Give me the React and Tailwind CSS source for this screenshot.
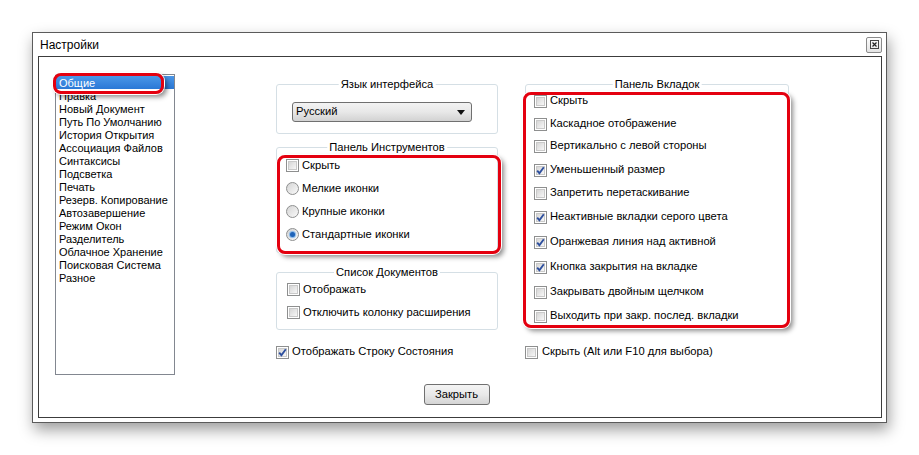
const font = { fontFamily: '"Liberation Sans", Arial, sans-serif' };

const pages = [
  'Общие', 'Правка', 'Новый Документ', 'Путь По Умолчанию', 'История Открытия',
  'Ассоциация Файлов', 'Синтаксисы', 'Подсветка', 'Печать', 'Резерв. Копирование',
  'Автозавершение', 'Режим Окон', 'Разделитель', 'Облачное Хранение',
  'Поисковая Система', 'Разное',
];

const tabOptions = [
  { label: 'Скрыть', on: false, cls: '' },
  { label: 'Каскадное отображение', on: false, cls: 'mt-[1px]' },
  { label: 'Вертикально с левой стороны', on: false, cls: 'mt-0' },
  { label: 'Уменьшенный размер', on: true, cls: 'mt-[2px]' },
  { label: 'Запретить перетаскивание', on: false, cls: 'mt-[1px]' },
  { label: 'Неактивные вкладки серого цвета', on: true, cls: 'mt-[2px]' },
  { label: 'Оранжевая линия над активной', on: true, cls: 'mt-[3px]' },
  { label: 'Кнопка закрытия на вкладке', on: true, cls: 'mt-[3px]' },
  { label: 'Закрывать двойным щелчком', on: false, cls: 'mt-[3px]' },
  { label: 'Выходить при закр. послед. вкладки', on: false, cls: 'mt-[2px]' },
];

function Check({ on }) {
  return (
    <span className="relative flex h-[13px] w-[13px] shrink-0 items-center justify-center border border-[#8e8f8f] bg-white">
      <span className="h-[9px] w-[9px] border border-[#c9c9c9] bg-gradient-to-br from-[#d6d6d6] to-[#f7f7f7]" />
      {on && (
        <svg className="absolute left-0 top-0" width="11" height="11" viewBox="0 0 11 11">
          <path d="M2.2 5.6 L4.4 8.2 L8.8 2.2" fill="none" stroke="#2d4f9e" strokeWidth="1.9" />
        </svg>
      )}
    </span>
  );
}

function Radio({ on }) {
  return (
    <span className="flex h-[13px] w-[13px] shrink-0 items-center justify-center rounded-full border border-[#8e8f8f] bg-gradient-to-br from-[#d4d4d4] to-[#fafafa]">
      {on && <span className="h-[5px] w-[5px] rounded-full bg-[#1f63b8] shadow-[0_0_1px_1px_#7fb4ea]" />}
    </span>
  );
}

function Option({ children, label, cls = '', gap = 'gap-[3px]' }) {
  return (
    <div className={`flex h-[22px] items-center ${gap} ${cls}`}>
      {children}
      <span className="text-[11.2px] leading-none text-black">{label}</span>
    </div>
  );
}

function Group({ title, className, children }) {
  return (
    <div className={`relative rounded-[3px] border border-[#d5dfe5] ${className}`}>
      <span className="absolute left-1/2 top-0 -translate-x-1/2 -translate-y-1/2 whitespace-nowrap bg-white px-[2px] text-[11.2px] leading-none text-black">
        {title}
      </span>
      {children}
    </div>
  );
}

function Ring({ className }) {
  return (
    <div
      className={`pointer-events-none absolute rounded-[8px] border-[3px] border-[#e4000f] shadow-[0_0_0_1px_#fff,3px_3px_5px_rgba(0,0,0,0.45)] ${className}`}
    />
  );
}

export default function App() {
  return (
    <div className="relative h-[455px] w-[919px] overflow-hidden bg-white pl-[32px] pt-[32px]" style={font}>
      <div className="flex h-[391px] w-[855px] flex-col border border-[#5b5b5b] bg-white shadow-[2px_7px_14px_rgba(0,0,0,0.38)]">
        {/* title bar */}
        <div className="flex h-[23px] items-center justify-between pl-[7px] pr-[4px]">
          <span className="text-[12px] text-black">Настройки</span>
          <span className="flex h-[16px] w-[16px] items-center justify-center rounded-[2px] border border-[#8a8a8a] bg-gradient-to-b from-[#fdfdfd] to-[#e4e4e4]">
            <svg width="9" height="9" viewBox="0 0 9 9">
              <rect x="0.5" y="0.5" width="8" height="8" fill="none" stroke="#444" strokeWidth="1" />
              <path d="M2.5 2.5 L6.5 6.5 M6.5 2.5 L2.5 6.5" stroke="#222" strokeWidth="1.2" />
            </svg>
          </span>
        </div>

        {/* client frame */}
        <div className="mb-[4px] ml-[5px] mr-[4px] flex flex-1 flex-col border border-[#3c3c3c] bg-white">
          <div className="flex items-start pl-[16px] pt-[17px]">
            {/* page list */}
            <div className="h-[301px] w-[120px] border border-[#828790] bg-white pt-[1px]">
              {pages.map((p, i) => (
                <div
                  key={p}
                  className={`flex h-[13px] items-center pl-[3px] pt-[1px] text-[11px] leading-none ${
                    i === 0 ? 'bg-gradient-to-b from-[#4a97e8] to-[#2a78d6] text-white' : 'text-black'
                  }`}
                >
                  {p}
                </div>
              ))}
            </div>

            {/* middle column */}
            <div className="ml-[101px] mt-[10px] flex w-[222px] flex-col">
              <Group title="Язык интерфейса" className="h-[50px] pl-[15px] pt-[17px]">
                <div className="flex h-[20px] w-[180px] items-center justify-between rounded-[3px] border border-[#707070] bg-gradient-to-b from-[#f3f3f3] via-[#e8e8e8] to-[#d2d2d2] pl-[3px] pr-[6px]">
                  <span className="text-[11.2px] leading-none text-black">Русский</span>
                  <svg width="8" height="5" viewBox="0 0 8 5">
                    <path d="M0 0 H8 L4 5 Z" fill="#111" />
                  </svg>
                </div>
              </Group>

              <Group title="Панель Инструментов" className="mt-[13px] h-[106px] pl-[9px] pt-[6px]">
                <Option label="Скрыть" cls="h-[23px]"><Check /></Option>
                <Option label="Мелкие иконки" cls="h-[23px]"><Radio /></Option>
                <Option label="Крупные иконки" cls="h-[23px]"><Radio /></Option>
                <Option label="Стандартные иконки" cls="h-[23px]"><Radio on /></Option>
              </Group>

              <Group title="Список Документов" className="mt-[19px] h-[58px] pl-[10px] pt-[5px]">
                <Option label="Отображать" cls="h-[23px]"><Check /></Option>
                <Option label="Отключить колонку расширения" cls="h-[23px]"><Check /></Option>
              </Group>

              <Option label="Отображать Строку Состояния" cls="mt-[11px]"><Check on /></Option>
            </div>

            {/* right column */}
            <div className="ml-[27px] mt-[10px] flex w-[264px] flex-col">
              <Group title="Панель Вкладок" className="h-[242px] pl-[8px] pt-[5px]">
                {tabOptions.map((o) => (
                  <Option key={o.label} label={o.label} cls={o.cls}>
                    <Check on={o.on} />
                  </Option>
                ))}
              </Group>
              <Option label="Скрыть (Alt или F10 для выбора)" cls="mt-[15px]" gap="gap-[4px]"><Check /></Option>
            </div>
          </div>

          <div className="mt-[9px] flex justify-center pr-[7px]">
            <button className="h-[21px] w-[66px] rounded-[3px] border border-[#707070] bg-gradient-to-b from-[#f4f4f4] via-[#e9e9e9] to-[#d4d4d4] text-[11.2px] leading-none text-black">
              Закрыть
            </button>
          </div>
        </div>
      </div>

      <Ring className="left-[53px] top-[73px] h-[21px] w-[111px]" />
      <Ring className="left-[277px] top-[155px] h-[99px] w-[224px]" />
      <Ring className="left-[523px] top-[92px] h-[236px] w-[267px]" />
    </div>
  );
}
